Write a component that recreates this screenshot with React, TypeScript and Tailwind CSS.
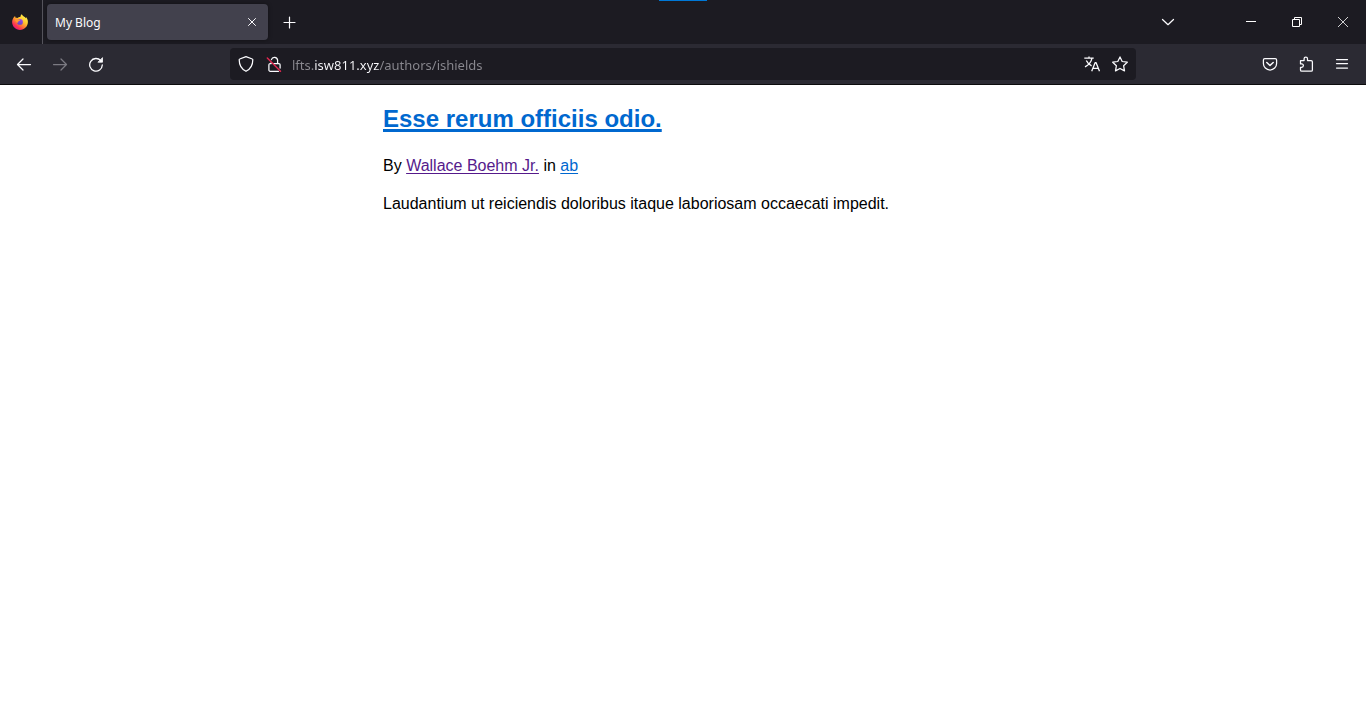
import { useState, type ReactNode } from "react";

type IconProps = { children: ReactNode; className?: string };

function Icon({ children, className = "" }: IconProps) {
  return (
    <svg
      viewBox="0 0 16 16"
      className={`size-4 shrink-0 ${className}`}
      fill="none"
      stroke="currentColor"
      strokeWidth="1.25"
      strokeLinecap="round"
      strokeLinejoin="round"
      aria-hidden="true"
    >
      {children}
    </svg>
  );
}

function ToolButton({ label, children, disabled }: { label: string; children: ReactNode; disabled?: boolean }) {
  return (
    <button
      type="button"
      aria-label={label}
      disabled={disabled}
      className="flex h-8 w-9 items-center justify-center rounded text-[#fbfbfe] disabled:text-[#7b7a82]"
    >
      {children}
    </button>
  );
}

function WindowButton({ label, children }: { label: string; children: ReactNode }) {
  return (
    <button type="button" aria-label={label} className="flex h-11 w-[46px] items-center justify-center text-white">
      <svg viewBox="0 0 10 10" className="size-2.5" fill="none" stroke="currentColor" strokeWidth="1" aria-hidden="true">
        {children}
      </svg>
    </button>
  );
}

function FirefoxLogo() {
  return (
    <svg viewBox="0 0 16 16" className="size-4" aria-hidden="true">
      <defs>
        <linearGradient id="flame" x1="0.85" y1="0.1" x2="0.2" y2="0.95">
          <stop offset="0" stopColor="#fff44f" />
          <stop offset="0.35" stopColor="#ffc52e" />
          <stop offset="0.6" stopColor="#ff7a35" />
          <stop offset="0.82" stopColor="#fb2f55" />
          <stop offset="1" stopColor="#e3158a" />
        </linearGradient>
        <linearGradient id="globe" x1="0.7" y1="0" x2="0.3" y2="1">
          <stop offset="0" stopColor="#a24be6" />
          <stop offset="1" stopColor="#5b44c8" />
        </linearGradient>
      </defs>
      <path
        fill="url(#flame)"
        d="M9.8 .2c-.9.6-1.400 1.700-1.400 2.800-1.300 0-2.400.5-3 1.100-.6-.3-.9-.3-1.500-.2-.6-.5-.8-1.200-.8-1.900C2.300 2.500 1.700 3.200 1.300 4 .5 5.300.1 6.700.1 8.100.1 12.500 3.600 16 8 16s7.900-3.500 7.900-7.900c0-1.900-.7-3.700-2-5 .1.500.2.900.2 1.300C13 2.700 10.500 2.300 9.800.2Z"
      />
      <circle cx="8" cy="7.900" r="2.900" fill="url(#globe)" />
      <path fill="#ff9a2e" d="M2.900 5.400c1.300-.9 2.900-.4 3.800.2.500.3 1.200.3 1.500.4-.1.700-1 .9-1.700 1.300-.5.400-.5 1-.3 1.500-1.700-.3-3-1.700-3.300-3.400Z" />
    </svg>
  );
}

function TitleBar() {
  return (
    <header className="relative flex h-11 items-center bg-[#1c1b22] text-[#fbfbfe]">
      <span className="absolute left-1/2 top-0 h-px w-12 -translate-x-1/2 bg-[#0078d7]" />
      <div className="flex h-11 w-[43px] items-center border-r border-[#55545c] pl-3">
        <FirefoxLogo />
      </div>
      <div className="ml-1 flex h-9 w-[221px] items-center justify-between rounded bg-[#42414d] pl-2 pr-1 shadow-[0_0_4px_rgba(0,0,0,0.4)]">
        <span className="pt-0.5 font-['Noto_Sans',sans-serif] text-xs">My Blog</span>
        <button type="button" aria-label="Close tab" className="flex size-6 items-center justify-center rounded">
          <Icon>
            <path d="M4.500 4.500l7 7M11.500 4.500l-7 7" strokeWidth="1" />
          </Icon>
        </button>
      </div>
      <button type="button" aria-label="New tab" className="ml-1 flex size-9 items-center justify-center rounded">
        <Icon>
          <path d="M7.500 3v11M2 8.500h11" strokeWidth="1.200" />
        </Icon>
      </button>
      <button type="button" aria-label="List all tabs" className="ml-auto mr-[42px] flex size-9 items-center justify-center rounded">
        <Icon>
          <path d="M2.500 5.500L8 10.700l5.500-5.200" />
        </Icon>
      </button>
      <WindowButton label="Minimize">
        <path d="M0 4.500h10" />
      </WindowButton>
      <WindowButton label="Restore">
        <path d="M.5 2.500h7v7h-7zM2.500 2.500v-2h7v7h-2" />
      </WindowButton>
      <WindowButton label="Close">
        <path d="M0 0l10 10M10 0L0 10" strokeWidth=".8" />
      </WindowButton>
    </header>
  );
}

function AddressBar() {
  const [url, setUrl] = useState("lfts.isw811.xyz/authors/ishields");
  return (
    <div className="mx-[116px] flex h-8 min-w-0 flex-1 items-center rounded bg-[#1c1b22] px-2 text-[#fbfbfe]">
      <button type="button" aria-label="Tracking protection">
        <Icon>
          <path d="M8 .7l6.300 2.300c.4.100.5.400.5.800C14.800 8.500 12.800 13 8 15.300 3.200 13 1.200 8.500 1.200 3.800c0-.4.100-.7.500-.8z" />
        </Icon>
      </button>
      <button type="button" aria-label="Connection not secure" className="ml-3">
        <Icon>
          <path d="M5.400 3.600A3.200 3.200 0 0 1 11.600 4.200V7.500M7.500 7.500h5.300c.8 0 1.300.5 1.300 1.300V12M12.500 15.300H4.300c-.8 0-1.400-.6-1.400-1.400V8.900c0-.8.600-1.400 1.400-1.400h.9V6.500" />
          <path d="M1.300 2l13.200 13.200" stroke="#e22850" strokeWidth="1.400" />
        </Icon>
      </button>
      <input
        type="text"
        aria-label="Search or enter address"
        spellCheck={false}
        value={url}
        onChange={(event) => setUrl(event.target.value)}
        className="ml-2.5 h-8 min-w-0 flex-1 bg-[linear-gradient(to_right,#8a8990_22px,#fbfbfe_22px,#fbfbfe_87px,#8a8990_87px)] bg-clip-text pt-0.5 font-['Noto_Sans',sans-serif] text-[13px] text-transparent caret-white outline-none"
      />
      <button type="button" aria-label="Translate page">
        <Icon>
          <path d="M.3 2.200h9.400M5 .4v1.800M2.300 4.500c1 2.300 2.900 4.100 5.300 5.300M7.900 2.400C7.200 6 4.600 9 1 10.800" strokeWidth="1.300" strokeLinecap="butt" />
          <path d="M7.700 15.200l3.500-8.600h.8l3.500 8.600M9 12.400h5.200" strokeWidth="1.300" strokeLinecap="butt" />
        </Icon>
      </button>
      <button type="button" aria-label="Bookmark this page" className="ml-3">
        <Icon>
          <path d="M8 .9l2.200 4.600 5.100.7-3.700 3.500.9 5.200L8 12.500l-4.500 2.400.9-5.200L.7 6.200l5.100-.7z" />
        </Icon>
      </button>
    </div>
  );
}

function Toolbar() {
  return (
    <nav aria-label="Navigation" className="flex items-center border-b border-[#0c0c0d] bg-[#2b2a33] px-1.5 py-1">
      <ToolButton label="Back">
        <Icon>
          <path d="M14.500 8.500H1.800M7 3L1.500 8.500 7 14" />
        </Icon>
      </ToolButton>
      <ToolButton label="Forward" disabled>
        <Icon>
          <path d="M1.500 8.500h12.700M9 3l5.500 5.500L9 14" />
        </Icon>
      </ToolButton>
      <ToolButton label="Reload">
        <Icon>
          <path d="M12.800 4.700A6.300 6.300 0 1 0 14.300 9" strokeWidth="1.300" />
          <path d="M14.500 2v4.200h-4.200z" fill="currentColor" strokeWidth=".8" />
        </Icon>
      </ToolButton>
      <AddressBar />
      <ToolButton label="Save to Pocket">
        <Icon>
          <path d="M2.800 2.500h10.400c.8 0 1.400.6 1.400 1.400v3.500a6.600 6.600 0 0 1-13.200 0V3.900c0-.8.600-1.400 1.400-1.400z" />
          <path d="M4.800 6.500L8 9.500l3.200-3" strokeWidth="1.500" />
        </Icon>
      </ToolButton>
      <ToolButton label="Extensions">
        <Icon>
          <path d="M2.500 4.600h3.600V2.700a1.700 1.700 0 0 1 3.400 0v1.900h3.600c.8 0 1.300.5 1.300 1.300v8c0 .8-.5 1.300-1.300 1.300H3.800c-.8 0-1.300-.5-1.300-1.300v-2.600h1.200a1.700 1.700 0 0 0 0-3.400H2.500z" />
        </Icon>
      </ToolButton>
      <ToolButton label="Open application menu">
        <Icon>
          <path d="M2.500 3.500h11M2.500 7.500h11M2.500 12h11" />
        </Icon>
      </ToolButton>
    </nav>
  );
}

export default function App() {
  return (
    <div className="min-h-screen bg-white">
      <TitleBar />
      <Toolbar />
      <main className="mx-auto max-w-[600px] pt-4 font-['Liberation_Sans',Arial,sans-serif] text-base text-black">
        <article>
          <h1 className="text-2xl leading-9 font-bold">
            <a href="#post" className="text-[#0068cf] underline decoration-3 underline-offset-2 [text-decoration-skip-ink:none]">
              Esse rerum officiis odio.
            </a>
          </h1>
          <p className="mt-[17px]">
            By{" "}
            <a href="#author" className="text-[#551a8b] underline decoration-1 underline-offset-2">
              Wallace Boehm Jr.
            </a>{" "}
            in{" "}
            <a href="#category" className="text-[#0068cf] underline decoration-1 underline-offset-2">
              ab
            </a>
          </p>
          <p className="mt-3.5">Laudantium ut reiciendis doloribus itaque laboriosam occaecati impedit.</p>
        </article>
      </main>
    </div>
  );
}
